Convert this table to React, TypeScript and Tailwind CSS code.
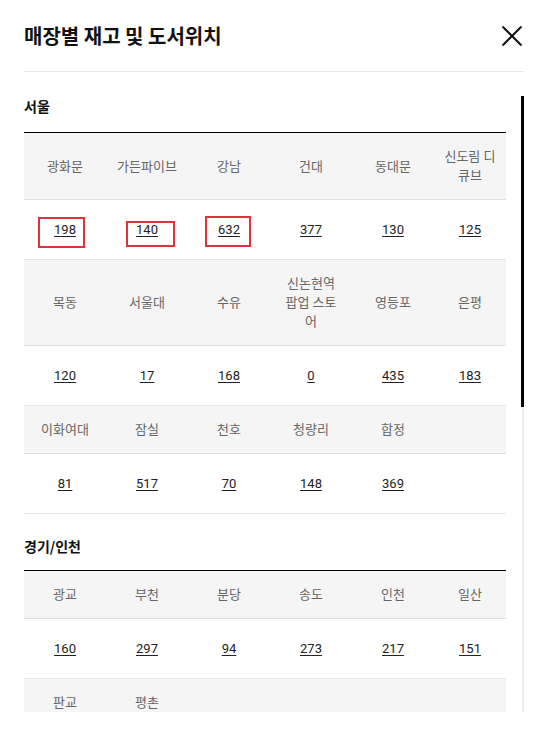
import React from "react";

type Cell = [string, string];

const seoul: Cell[][] = [
  [["광화문", "198"], ["가든파이브", "140"], ["강남", "632"], ["건대", "377"], ["동대문", "130"], ["신도림 디\n큐브", "125"]],
  [["목동", "120"], ["서울대", "17"], ["수유", "168"], ["신논현역\n팝업 스토\n어", "0"], ["영등포", "435"], ["은평", "183"]],
  [["이화여대", "81"], ["잠실", "517"], ["천호", "70"], ["청량리", "148"], ["합정", "369"]],
];

const gyeonggi: Cell[][] = [
  [["광교", "160"], ["부천", "297"], ["분당", "94"], ["송도", "273"], ["인천", "217"], ["일산", "151"]],
  [["판교", ""], ["평촌", ""]],
];

function StockTable({ rows, marks }: { rows: Cell[][]; marks?: boolean }) {
  return (
    <div className="relative border-t border-black">
      {rows.map((row, i) => (
        <React.Fragment key={i}>
          <div className="grid grid-cols-[82px_82px_82px_82px_82px_1fr] bg-[#f5f5f5] border-b border-[#e0e0e0]">
            {Array.from({ length: 6 }).map((_, j) => (
              <div
                key={j}
                className="px-1 py-[14px] flex items-center justify-center text-center text-[13px] leading-[19px] text-[#666] whitespace-pre-line"
              >
                {row[j] ? row[j][0] : ""}
              </div>
            ))}
          </div>
          <div className="grid grid-cols-[82px_82px_82px_82px_82px_1fr] border-b border-[#e5e5e5]">
            {Array.from({ length: 6 }).map((_, j) => (
              <div key={j} className="py-[20px] text-center text-[13px] leading-[19px] text-[#222]">
                {row[j] && row[j][1] !== "" ? (
                  <span className="underline underline-offset-2 decoration-1">{row[j][1]}</span>
                ) : null}
              </div>
            ))}
          </div>
        </React.Fragment>
      ))}
      {marks && (
        <>
          <div className="absolute left-[14px] top-[84px] w-[47px] h-[31px] border-2 border-[#e0313c]" />
          <div className="absolute left-[102px] top-[88px] w-[49px] h-[26px] border-2 border-[#e0313c]" />
          <div className="absolute left-[181px] top-[83px] w-[46px] h-[31px] border-2 border-[#e0313c]" />
        </>
      )}
    </div>
  );
}

export default function App() {
  return (
    <div className="w-[548px] h-[741px] bg-white overflow-hidden font-['Roboto','Noto_Sans_CJK_KR',sans-serif]">
      <div className="mx-6 h-[72px] border-b border-[#e6e6e6] flex items-center justify-between">
        <h1 className="text-[20px] leading-[28px] font-bold text-[#111] font-['Noto_Sans_CJK_KR',sans-serif]">
          매장별 재고 및 도서위치
        </h1>
        <svg width="22" height="22" viewBox="0 0 22 22" className="mr-[1px]">
          <path d="M1.5 1.5 L20.5 20.5 M20.5 1.5 L1.5 20.5" stroke="#111" strokeWidth="2" fill="none" />
        </svg>
      </div>
      <div className="mx-6 h-[640px] flex gap-[15px] overflow-hidden">
        <div className="w-[482px] h-[640px] overflow-hidden">
          <div className="pt-[24px]">
            <h2 className="text-[14px] leading-[20px] font-bold text-[#111] mb-[16px] font-['Noto_Sans_CJK_KR',sans-serif]">
              서울
            </h2>
            <StockTable rows={seoul} marks />
          </div>
          <div className="pt-[22px]">
            <h2 className="text-[14px] leading-[20px] font-bold text-[#111] mb-[14px] font-['Noto_Sans_CJK_KR',sans-serif]">
              경기/인천
            </h2>
            <StockTable rows={gyeonggi} />
          </div>
        </div>
        <div className="w-[3px] pt-[24px] flex flex-col items-center">
          <div className="w-[3px] h-[311px] bg-black" />
          <div className="w-[2px] flex-1 bg-[#ececec]" />
        </div>
      </div>
    </div>
  );
}
